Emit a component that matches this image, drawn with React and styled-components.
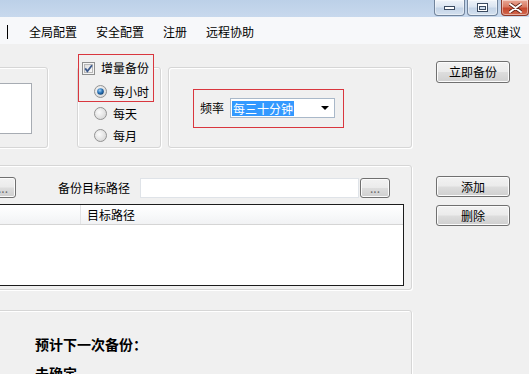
import React from "react";
import styled, { createGlobalStyle } from "styled-components";

const GlobalStyle = createGlobalStyle`
  html, body {
    margin: 0;
    padding: 0;
    background: #f0f0f0;
    overflow: hidden;
  }
`;

const Frame = styled.div`
  width: 529px;
  height: 374px;
  overflow: hidden;
  background: #f0f0f0;
  font-family: "Noto Sans CJK SC", "Liberation Sans", sans-serif;
  font-size: 12px;
  color: #000;
`;

const TitleBar = styled.div`
  height: 17px;
  display: flex;
  justify-content: flex-end;
  align-items: flex-start;
  background: linear-gradient(180deg, #bcd0e8 0%, #c8d9ed 100%);
`;

const CaptionGroup = styled.div`
  display: flex;
  gap: 2px;
`;

const CaptionButton = styled.div`
  box-sizing: border-box;
  width: ${(p) => p.$w}px;
  height: 16px;
  margin-left: ${(p) => p.$ml || 0}px;
  display: flex;
  align-items: center;
  justify-content: center;
  border: 1px solid ${(p) => (p.$close ? "#8d3a2a" : "#71849c")};
  border-top: none;
  border-radius: 0 0 4px 4px;
  background: ${(p) =>
    p.$close
      ? "linear-gradient(180deg, #eaa896 0%, #d97a63 45%, #c6472d 55%, #d2694f 100%)"
      : "linear-gradient(180deg, #eef3f9 0%, #dbe5f1 45%, #c4d4e7 55%, #d4e1ef 100%)"};
  box-shadow: inset 0 0 0 1px rgba(255, 255, 255, 0.45);
`;

const MenuBar = styled.div`
  box-sizing: border-box;
  height: 27px;
  padding: 2px 8px 0 7px;
  display: flex;
  align-items: center;
  background: #f7f8fa;
`;

const Separator = styled.span`
  width: 1px;
  height: 14px;
  background: #000;
  margin-right: 21px;
`;

const MenuItem = styled.span`
  line-height: 14px;
  margin-right: ${(p) => (p.$last ? 0 : 19)}px;
`;

const Spacer = styled.div`
  flex: 1;
`;

const Body = styled.div`
  margin-left: -60px;
  display: flex;
  flex-direction: column;
`;

const Row = styled.div`
  display: flex;
  align-items: flex-start;
  margin-top: ${(p) => p.$mt}px;
`;

const GroupBox = styled.div`
  box-sizing: border-box;
  flex: none;
  width: ${(p) => p.$w}px;
  height: ${(p) => p.$h}px;
  margin-left: ${(p) => p.$ml || 0}px;
  border: 1px solid #d6d6d6;
  border-radius: 3px;
  box-shadow: inset 1px 1px 0 #fff, 1px 1px 0 #fff;
  display: flex;
  flex-direction: ${(p) => p.$dir || "row"};
  justify-content: ${(p) => p.$justify || "flex-start"};
  align-items: flex-start;
  padding: ${(p) => p.$pad || "0"};
`;

const TextArea = styled.div`
  box-sizing: border-box;
  width: 100px;
  height: 51px;
  background: #fff;
  border: 1px solid #a7acb3;
`;

const Highlight = styled.div`
  box-sizing: border-box;
  display: flex;
  flex-direction: ${(p) => p.$dir || "row"};
  align-items: ${(p) => (p.$dir === "column" ? "flex-start" : "center")};
  border: 1px solid #d9363e;
  background: ${(p) => p.$bg || "transparent"};
  margin: ${(p) => p.$margin};
  padding: ${(p) => p.$pad};
  width: ${(p) => (p.$w ? `${p.$w}px` : "auto")};
`;

const CheckRow = styled.label`
  display: flex;
  align-items: center;
  gap: 6px;
  height: 12px;
  line-height: 12px;
`;

const RadioRow = styled.label`
  display: flex;
  align-items: center;
  gap: 6px;
  height: 18px;
  margin: ${(p) => p.$m};
`;

const FieldLabel = styled.span`
  flex: none;
  line-height: 14px;
  margin-left: ${(p) => p.$ml || 0}px;
`;

const Combo = styled.div`
  box-sizing: border-box;
  width: 105px;
  height: 20px;
  margin-left: 6px;
  background: #fff;
  border: 1px solid #a9b8c9;
  display: flex;
  align-items: center;
  padding: 0 5px 0 1px;
`;

const Selected = styled.span`
  background: #3399ff;
  color: #fff;
  line-height: 15px;
  padding: 0 1px;
`;

const Arrow = styled.span`
  margin-left: auto;
  width: 0;
  height: 0;
  border-left: 4px solid transparent;
  border-right: 4px solid transparent;
  border-top: 4px solid #000;
`;

const Button = styled.button`
  box-sizing: border-box;
  flex: none;
  width: ${(p) => p.$w}px;
  height: ${(p) => p.$h}px;
  margin-left: ${(p) => p.$ml || 0}px;
  margin-top: ${(p) => p.$mt || 0}px;
  padding: 0;
  border: 1px solid #707070;
  border-radius: 3px;
  background: linear-gradient(180deg, #f2f2f2 0%, #ebebeb 48%, #dddddd 52%, #cfcfcf 100%);
  box-shadow: inset 0 0 0 1px #fbfbfb;
  font: inherit;
  color: ${(p) => (p.$dim ? "#6d6d6d" : "#000")};
  line-height: 14px;
`;

const ButtonColumn = styled.div`
  display: flex;
  flex-direction: column;
  gap: 8px;
  margin: 11px 0 0 24px;
`;

const PathRow = styled.div`
  display: flex;
  align-items: center;
  height: 21px;
`;

const PathInput = styled.div`
  box-sizing: border-box;
  width: 219px;
  height: 20px;
  margin-left: 10px;
  background: #fff;
  border: 1px solid #dfe3e8;
`;

const ListView = styled.div`
  box-sizing: border-box;
  width: 414px;
  height: 82px;
  margin: 6px 0 0 49px;
  background: #fff;
  border: 1px solid #1c1c1c;
`;

const ListHeader = styled.div`
  display: flex;
  height: 19px;
  background: linear-gradient(180deg, #ffffff 0%, #f7f8f9 60%, #f1f2f4 100%);
  border-bottom: 1px solid #d5d5d5;
`;

const HeaderCell = styled.div`
  box-sizing: border-box;
  width: ${(p) => (p.$w ? `${p.$w}px` : "auto")};
  flex: ${(p) => (p.$w ? "none" : 1)};
  border-right: ${(p) => (p.$w ? "1px solid #e2e3e5" : "none")};
  padding-left: 6px;
  line-height: 19px;
`;

const NextTitle = styled.div`
  font-size: 14px;
  font-weight: 700;
  line-height: 20px;
`;

const NextValue = styled.div`
  font-size: 14px;
  font-weight: 700;
  line-height: 20px;
  margin-top: 9px;
`;

const CheckBox = () => (
  <svg width="13" height="13" viewBox="0 0 13 13">
    <defs>
      <linearGradient id="cbg" x1="0" y1="0" x2="1" y2="1">
        <stop offset="0" stopColor="#dcdcdc" />
        <stop offset="1" stopColor="#fbfbfb" />
      </linearGradient>
    </defs>
    <rect x="0.5" y="0.5" width="12" height="12" fill="#f4f4f4" stroke="#8e8f8f" />
    <rect x="2.5" y="2.5" width="8" height="8" fill="url(#cbg)" stroke="#b8b8b8" />
    <path d="M3.2 6.4 L5.4 9.3 L10 3.2" fill="none" stroke="#3d5a8c" strokeWidth="1.8" />
  </svg>
);

const Radio = ({ checked }) => (
  <svg width="13" height="13" viewBox="0 0 13 13">
    <defs>
      <radialGradient id="rbg" cx="0.4" cy="0.4" r="0.7">
        <stop offset="0" stopColor="#fbfbfb" />
        <stop offset="1" stopColor="#d4d4d4" />
      </radialGradient>
      <radialGradient id="rdot" cx="0.4" cy="0.35" r="0.7">
        <stop offset="0" stopColor="#a7d3f5" />
        <stop offset="0.5" stopColor="#2f79bd" />
        <stop offset="1" stopColor="#0c3b6b" />
      </radialGradient>
    </defs>
    <circle cx="6.5" cy="6.5" r="6" fill="url(#rbg)" stroke="#939393" />
    {checked && <circle cx="6.5" cy="6.5" r="3.3" fill="url(#rdot)" />}
  </svg>
);

const MinIcon = () => (
  <svg width="11" height="6" viewBox="0 0 11 6">
    <rect x="0.5" y="1.5" width="10" height="3" fill="#fff" stroke="#3a4a60" />
  </svg>
);

const MaxIcon = () => (
  <svg width="11" height="9" viewBox="0 0 11 9">
    <rect x="0.5" y="0.5" width="10" height="8" fill="#fff" stroke="#3a4a60" />
    <rect x="2.5" y="3.5" width="6" height="3" fill="#cfdcec" stroke="#3a4a60" />
  </svg>
);

const CloseIcon = () => (
  <svg width="13" height="10" viewBox="0 0 13 10">
    <path
      d="M1 1 L12 9 M12 1 L1 9"
      stroke="#5a1f14"
      strokeWidth="3.6"
      strokeLinecap="round"
    />
    <path
      d="M1 1 L12 9 M12 1 L1 9"
      stroke="#fff"
      strokeWidth="2"
      strokeLinecap="round"
    />
  </svg>
);

const App = () => {
  return (
    <Frame>
      <GlobalStyle />
      <TitleBar>
        <CaptionGroup>
          <CaptionButton $w={31}>
            <MinIcon />
          </CaptionButton>
          <CaptionButton $w={31}>
            <MaxIcon />
          </CaptionButton>
          <CaptionButton $w={28} $ml={1} $close>
            <CloseIcon />
          </CaptionButton>
        </CaptionGroup>
      </TitleBar>

      <MenuBar>
        <Separator />
        <MenuItem>全局配置</MenuItem>
        <MenuItem>安全配置</MenuItem>
        <MenuItem>注册</MenuItem>
        <MenuItem>远程协助</MenuItem>
        <Spacer />
        <MenuItem $last>意见建议</MenuItem>
      </MenuBar>

      <Body>
        <Row $mt={23}>
          <GroupBox $w={108} $h={81} $justify="flex-end" $pad="15px 15px 0 0">
            <TextArea />
          </GroupBox>

          <GroupBox $w={84} $h={81} $ml={29} $dir="column">
            <Highlight
              $dir="column"
              $bg="#f0f0f0"
              $w={76}
              $margin="-14px 0 0 0"
              $pad="7px 0 1px 3px"
            >
              <CheckRow>
                <CheckBox />
                增量备份
              </CheckRow>
              <RadioRow $m="8px 0 0 12px">
                <Radio checked />
                每小时
              </RadioRow>
            </Highlight>
            <RadioRow $m="2px 0 0 16px">
              <Radio />
              每天
            </RadioRow>
            <RadioRow $m="4px 0 0 16px">
              <Radio />
              每月
            </RadioRow>
          </GroupBox>

          <GroupBox $w={244} $h={81} $ml={7}>
            <Highlight $margin="21px 0 0 24px" $pad="8px 8px 9px 6px">
              <FieldLabel>频率</FieldLabel>
              <Combo>
                <Selected>每三十分钟</Selected>
                <Arrow />
              </Combo>
            </Highlight>
          </GroupBox>

          <Button $w={74} $h={22} $ml={24} $mt={-6}>
            立即备份
          </Button>
        </Row>

        <Row $mt={17}>
          <GroupBox $w={472} $h={125} $dir="column" $pad="11px 0 0 0">
            <PathRow>
              <Button $w={26} $h={21} $ml={49} $dim>
                ...
              </Button>
              <FieldLabel $ml={42}>备份目标路径</FieldLabel>
              <PathInput />
              <Button $w={30} $h={20} $ml={1} $dim>
                ...
              </Button>
            </PathRow>
            <ListView>
              <ListHeader>
                <HeaderCell $w={90} />
                <HeaderCell>目标路径</HeaderCell>
              </ListHeader>
            </ListView>
          </GroupBox>

          <ButtonColumn>
            <Button $w={74} $h={21}>
              添加
            </Button>
            <Button $w={74} $h={21}>
              删除
            </Button>
          </ButtonColumn>
        </Row>

        <Row $mt={20}>
          <GroupBox $w={472} $h={100} $dir="column" $pad="23px 0 0 94px">
            <NextTitle>预计下一次备份：</NextTitle>
            <NextValue>未确定</NextValue>
          </GroupBox>
        </Row>
      </Body>
    </Frame>
  );
};

export default App;
